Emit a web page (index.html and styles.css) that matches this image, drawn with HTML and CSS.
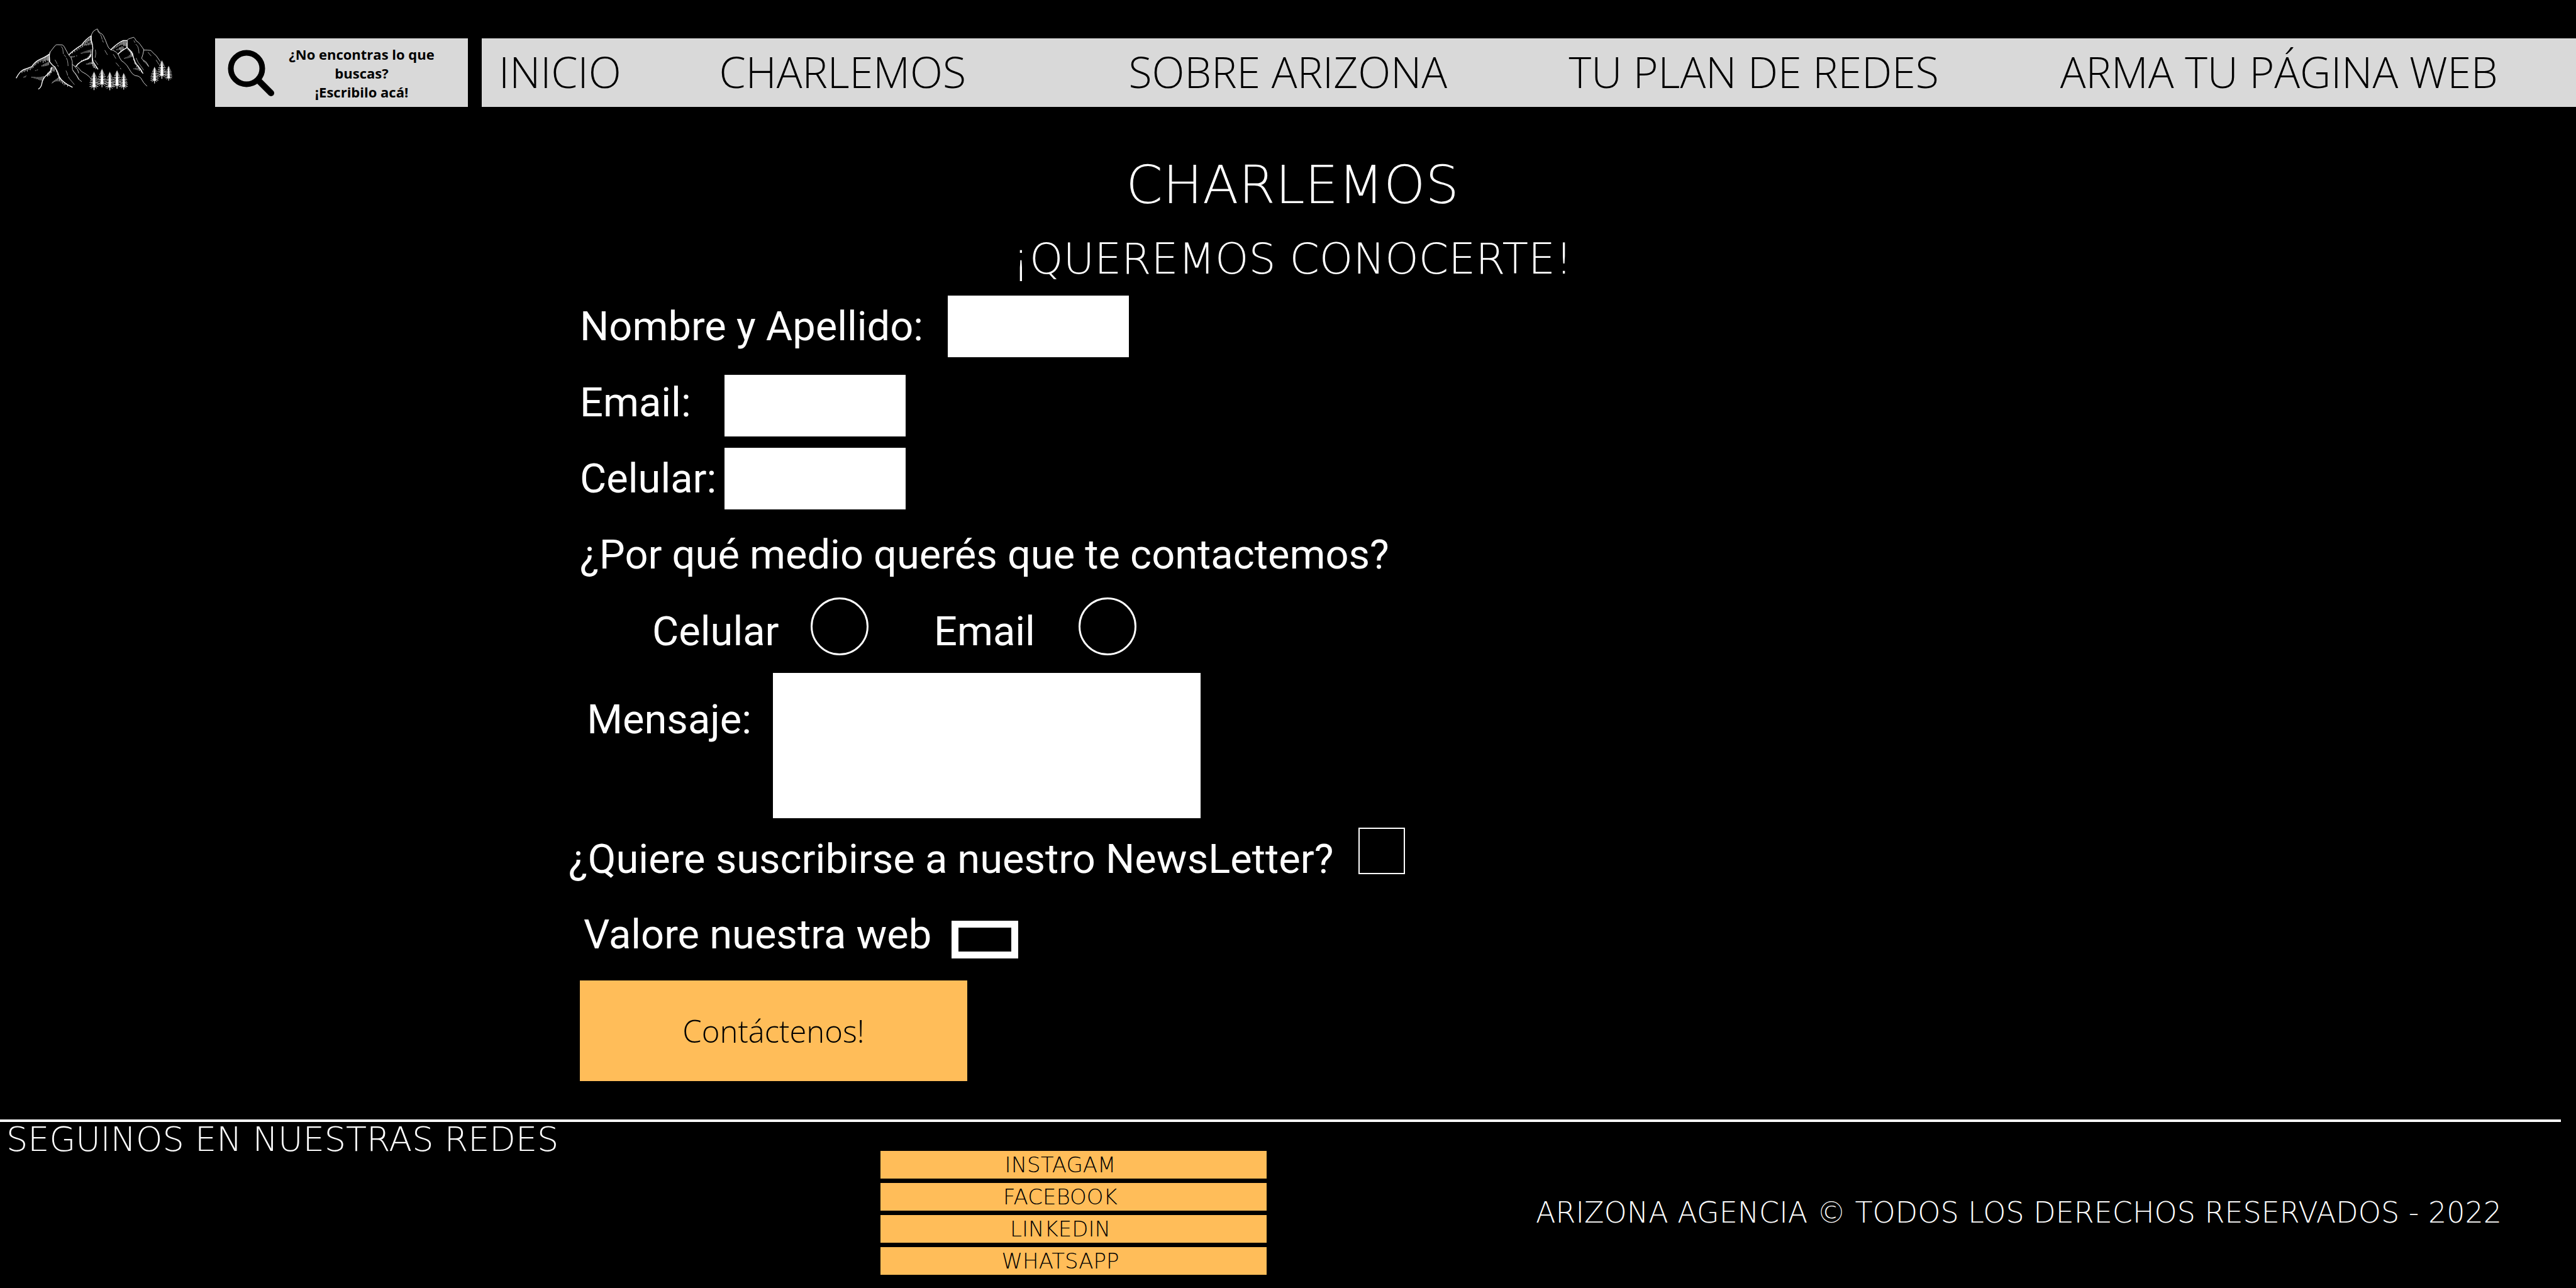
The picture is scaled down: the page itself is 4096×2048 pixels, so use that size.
FILE: index.html
```html
<!DOCTYPE html>
<html lang="es">
<head>
<meta charset="utf-8">
<meta name="viewport" content="width=device-width, initial-scale=1">
<title>Charlemos - Arizona Agencia</title>
<link rel="stylesheet" href="styles.css">
</head>
<body>
<header class="header">
  <a class="logo" href="#" aria-label="Arizona Agencia">
    <svg viewBox="120 100 1280 520" fill="none" stroke="#fff" stroke-linecap="round" stroke-linejoin="round">
      <defs>
        <g id="tree" stroke-width="4">
          <path fill="#fff" stroke="none" d="M0 0L5 30L9 70L12 125L3 128V152H-3V128L-12 125L-9 70L-5 30Z"/>
          <path d="M0 12l-7 9M0 12l7 9M0 22l-13 9M0 22l13 9M0 32l-18 10M0 32l17 9M0 42l-20 8M0 42l22 10M0 52l-16 14M0 52l17 14M0 60l-28 4M0 60l29 4M0 70l-30 9M0 70l27 10M0 80l-22 14M0 80l24 14M0 88l-34 4M0 88l32 4M0 98l-33 10M0 98l34 9M0 108l-26 14M0 108l28 13M0 116l-35 8M0 116l33 8M0 122l-24 14M0 122l22 14"/>
        </g>
      </defs>
      <!-- ridges -->
      <path stroke-width="4" d="M397 315Q400 300 412 288L440 252Q450 240 462 242L500 244Q510 248 515 258L550 322Q575 345 580 375L581 440Q590 460 603 470Q620 490 634 522L655 538M400 300Q392 330 400 375M581 402Q600 418 620 420Q640 440 655 458Q690 475 712 495L737 522M600 418Q630 440 632 470"/>
      <path stroke-width="4" d="M731 172Q735 155 750 134Q765 122 782 115Q788 128 800 146Q820 152 830 170Q850 210 862 245Q870 272 890 282Q930 292 948 318Q960 350 975 370Q1000 385 1020 410Q1040 440 1050 458Q1068 485 1085 490Q1115 492 1130 508Q1155 555 1180 575M733 170V200"/>
      <path stroke-width="4" d="M1022 205Q1030 195 1050 190L1074 182Q1085 190 1095 212Q1115 222 1126 240Q1145 265 1156 283Q1150 320 1138 352Q1150 370 1170 378Q1185 395 1195 418M1156 285Q1185 285 1212 288Q1235 315 1255 330L1288 378"/>
      <!-- shaded slopes -->
      <path stroke-width="7" d="M130 509Q155 460 185 444Q220 432 255 418Q280 378 320 360Q370 338 395 318V375Q420 410 440 420Q465 460 475 500Q500 545 580 584M416 425Q415 455 370 490Q340 515 333 565Q325 590 309 598"/>
      <path stroke-width="7" d="M553 324Q590 285 655 245Q690 195 731 172Q730 205 742 240Q748 270 742 300Q738 350 748 380L786 438M730 320Q722 345 700 358Q645 370 611 415"/>
      <path stroke-width="7" d="M890 282Q945 228 990 208L1021 208V265Q975 290 948 318M1021 265Q1065 300 1072 345Q1085 390 1105 410Q1130 435 1148 472"/>
      <!-- hatching -->
      <path stroke-width="4" d="M175 452v16M185 448v10M196 446v14M207 440v12M219 438v18M231 432v11M243 428v16M255 420v12M266 408v18M276 396v14M286 386v18M296 378v12M306 371v20M316 366v11M326 362v18M336 358v12M346 352v34M355 348v24M364 341v38M372 337v28M380 330v40M388 324v44M394 340v36M412 424v44M405 430v40M398 455v32M389 462v28M381 470v28M424 420v34M434 420v36M444 430v14M453 446v18M462 468v16M470 486v26M480 505v24M490 525v20M502 540v15M515 548v18M528 555v9M542 563v14"/>
      <path stroke-width="3" d="M335 415v-5M343 415v-10M351 414v-14M359 413v-18M367 411v-18M375 410v-22M383 407v-24M390 404v-22M255 501v6M264 502v5M273 502v9M282 503v9M291 504v13M300 504v13M309 504v18M318 503v23M327 502v25M336 500v30M344 498v22M352 496v18M417 552l6-10M425 547l5-12M433 540l5-10M441 538l5-14M450 535l4-18M459 535l3-22M468 535l2-27M477 537v-30M190 506l4-8M200 504l8-12M283 450h4M296 446l6-2"/>
      <path stroke-width="4" d="M582 304v6M600 290v10M618 278v10M634 268v10M650 258v9M664 242v18M674 230v14M684 216v24M692 210v14M700 204v22M708 198v14M716 192v24M724 184v22M730 200v24M740 350v46M746 385v28M752 394v32M760 408v20M770 420v16M729 300v40M722 322v26M714 334v22M706 342v18M697 350v12M686 354v12M672 362v10M655 368v8"/>
      <path stroke-width="3" d="M676 248l5-2M686 247v-7M694 247v-12M702 245v-14M710 245v-18M718 242v-17M726 240v-16M735 240v-20M650 310h10M666 309v-6M676 308v-10M686 307v-12M696 306v-14M706 305v-16M714 303v-16M722 302v-16M731 300v-20M572 335v10M580 336v8M588 336v6M598 334v6M612 332h5M692 398h6M702 400v-5M710 400v-9M718 399v-12M726 398v-14M734 397v-12"/>
      <path stroke-width="4" d="M910 268v10M922 262v8M934 254v10M946 245v12M958 237v12M968 228v16M978 220v22M986 214v26M994 212v40M1002 212v36M1010 212v42M1018 230v34M990 262v20M980 255v32M970 264v30M1030 275v12M1040 284v14M1050 290v22M1060 298v26M1066 310v26M1074 350v16M1082 370v24M1090 388v14M1100 402v20M1112 412v22M1124 430v20M1136 445v18"/>
      <path stroke-width="3" d="M938 285v-6M948 285v-10M958 282v-14M964 280v-16M998 352h6M1010 351v-6M1020 350v-8M1030 348v-12M1040 345v-18M1050 342v-26M1058 338v-30M1074 436h6M1088 440v-10M1098 443v-12M1108 446v-16M1118 450v-20"/>
      <!-- crevices -->
      <path stroke-width="3" d="M490 257Q503 262 504 280L508 315M515 324L528 340M533 350Q545 370 545 395L546 412M442 365L458 395M462 405L467 416M530 452Q540 470 543 488M548 500Q555 518 570 530L596 562M585 450L612 488L632 522M783 128Q790 146 802 152M806 160Q818 175 820 198M823 208l7 14M766 284Q775 310 764 345M762 368L786 402M842 288L862 322M910 320L930 352M932 388L956 416M966 430l5 8M1076 210l8 14M1092 238Q1112 255 1114 282L1117 310M1094 350Q1105 385 1130 412L1153 445M1190 304L1214 332M1255 366L1276 400M1150 372L1172 390L1190 412"/>
      <use href="#tree" x="755" y="455"/><use href="#tree" x="819" y="433"/><use href="#tree" x="882" y="457"/><use href="#tree" x="940" y="444"/><use href="#tree" transform="translate(994 467) scale(.9)"/>
      <use href="#tree" transform="translate(1242 417) scale(.9)"/><use href="#tree" x="1301" y="364"/><use href="#tree" transform="translate(1355 410) scale(.8)"/>
    </svg>
  </a>
  <button class="search" type="button">
    <svg class="search-icon" viewBox="0 0 74 74" fill="none" stroke="#000" aria-hidden="true">
      <circle cx="30" cy="30" r="25" stroke-width="9"/>
      <path d="M49 49L69 69" stroke-width="10" stroke-linecap="round"/>
    </svg>
    <span class="search-text">¿No encontras lo que buscas?<br>¡Escribilo acá!</span>
  </button>
  <nav class="nav">
    <a href="#">INICIO</a>
    <a href="#">CHARLEMOS</a>
    <a href="#">SOBRE ARIZONA</a>
    <a href="#">TU PLAN DE REDES</a>
    <a href="#">ARMA TU PÁGINA WEB</a>
  </nav>
</header>

<main class="main">
  <div class="heading">
    <h1>CHARLEMOS</h1>
    <h2>¡QUEREMOS CONOCERTE!</h2>
  </div>
  <form class="form">
    <div class="row indent">
      <label class="wide" for="nombre">Nombre y Apellido:</label>
      <input class="box" id="nombre" type="text">
    </div>
    <div class="row row-top indent">
      <label class="narrow" for="email">Email:</label>
      <input class="box" id="email" type="email">
    </div>
    <div class="row indent">
      <label class="narrow" for="celular">Celular:</label>
      <input class="box" id="celular" type="tel">
    </div>
    <fieldset class="contact">
      <legend class="indent">¿Por qué medio querés que te contactemos?</legend>
      <div class="choices">
        <span class="choice"><label for="por-celular">Celular</label><input id="por-celular" type="radio" name="medio"></span>
        <span class="choice"><label for="por-email">Email</label><input id="por-email" type="radio" name="medio"></span>
      </div>
    </fieldset>
    <div class="row message indent-more">
      <label for="mensaje">Mensaje:</label>
      <textarea id="mensaje"></textarea>
    </div>
    <div class="newsletter">
      <label for="newsletter">¿Quiere suscribirse a nuestro NewsLetter?</label>
      <input id="newsletter" type="checkbox">
    </div>
    <div class="rating indent-more">
      <label class="wide" for="valor">Valore nuestra web</label>
      <input id="valor" type="text" inputmode="numeric">
    </div>
    <button class="submit indent" type="submit">Contáctenos!</button>
  </form>
</main>

<footer class="footer">
  <p class="follow">SEGUINOS EN NUESTRAS REDES</p>
  <nav class="social">
    <a href="#">INSTAGAM</a>
    <a href="#">FACEBOOK</a>
    <a href="#">LINKEDIN</a>
    <a href="#">WHATSAPP</a>
  </nav>
  <p class="copyright">ARIZONA AGENCIA © TODOS LOS DERECHOS RESERVADOS - 2022</p>
</footer>
</body>
</html>
```
FILE: styles.css
```css
* { box-sizing: border-box; }

body {
  margin: 0;
  background: #000;
  color: #fff;
  font-family: Roboto, sans-serif;
}

h1, h2, p { margin: 0; font-weight: 200; }

/* header */
.header {
  display: flex;
  align-items: flex-end;
  min-height: 170px;
  padding-top: 43px;
}

.logo {
  flex: none;
  align-self: flex-start;
  width: 253px;
  margin: 0 65px 0 24px;
}
.logo svg { display: block; width: 100%; }

.search {
  display: flex;
  flex: none;
  align-items: center;
  width: 402px;
  height: 109px;
  margin-right: 22px;
  padding: 0 40px 0 20px;
  border: 0;
  background: #d9d9d9;
  color: #000;
  font: 700 22px/30px "Open Sans", sans-serif;
}
.search-icon { flex: none; width: 74px; height: 74px; }
.search-text { flex: 1; padding-left: 10px; }

.nav {
  display: grid;
  flex: 1;
  grid-template-columns: 350fr 650fr 699fr 780fr 819fr;
  align-items: center;
  height: 109px;
  padding: 0 0 4px 27px;
  background: #d9d9d9;
}
.nav a {
  color: #000;
  font: 300 68px/100px "Open Sans", sans-serif;
  text-decoration: none;
  white-space: nowrap;
}

/* headings */
.heading {
  padding: 76px 0 0 14px;
  font-family: "DejaVu Sans Light", "DejaVu Sans", sans-serif;
  text-align: center;
}
.heading h1 { font-size: 84px; line-height: 96px; }
.heading h2 { padding-top: 30px; font-size: 68px; line-height: 80px; }

/* form */
.form {
  padding: 18px 0 0 904px;
  font-size: 65px;
  line-height: 76px;
}
.indent { margin-left: 18px; }
.indent-more { margin-left: 24px; }

.row { display: flex; align-items: center; margin-bottom: 18px; }
.row label { line-height: 88px; }
.row-top { align-items: flex-start; }
.row:first-child { margin-bottom: 28px; }

label { flex: none; }
.wide { width: 585px; }
.narrow { width: 230px; }

input, textarea {
  margin: 0;
  padding: 0 16px;
  border: 0;
  border-radius: 0;
  background: #fff;
  font: inherit;
  appearance: none;
}
.box { width: 288px; height: 98px; }

.contact { margin: 0; padding: 0; border: 0; }
.contact legend { padding: 16px 0 30px; }

.choices { display: flex; gap: 104px; padding-left: 133px; }
.choice { display: flex; align-items: flex-end; }
.choice label { width: 252px; }
.choice + .choice label { width: 230px; }
.choice input {
  width: 92px;
  height: 92px;
  padding: 0;
  border: 3px solid #fff;
  border-radius: 50%;
  background: none;
}

.message { align-items: flex-start; gap: 34px; margin-top: 28px; margin-bottom: 15px; }
.message label { width: 267px; padding-top: 30px; text-align: right; }
textarea { width: 680px; height: 231px; resize: none; }

.newsletter { display: flex; height: 88px; margin-bottom: 44px; }
.newsletter label { align-self: flex-end; width: 1256px; }
.newsletter input {
  width: 74px;
  height: 74px;
  padding: 0;
  border: 2px solid #fff;
  background: none;
}

.rating { display: flex; align-items: flex-end; margin-bottom: 35px; }
.rating input {
  width: 106px;
  height: 60px;
  padding: 0;
  border: 11px solid #fff;
  background: none;
}

.submit {
  display: block;
  width: 616px;
  height: 160px;
  border: 0;
  background: #ffbd59;
  color: #000;
  font: 300 49px/68px "Open Sans", sans-serif;
}

/* footer */
.footer {
  display: grid;
  grid-template-columns: 1400px 614px 1fr;
  margin: 61px 24px 0 0;
  padding-bottom: 22px;
  border-top: 4px solid #fff;
  font-family: "DejaVu Sans Light", "DejaVu Sans", sans-serif;
  font-weight: 200;
}
.follow { padding-left: 10px; font-size: 54px; line-height: 56px; }
.social { display: grid; gap: 7px; padding-top: 46px; }
.social a {
  padding-right: 42px;
  background: #ffbd59;
  color: #000;
  font-size: 34px;
  line-height: 44px;
  text-align: center;
  text-decoration: none;
}
.copyright {
  align-self: center;
  padding: 44px 94px 0 0;
  font-size: 46px;
  line-height: 52px;
  text-align: right;
  white-space: nowrap;
}
```
